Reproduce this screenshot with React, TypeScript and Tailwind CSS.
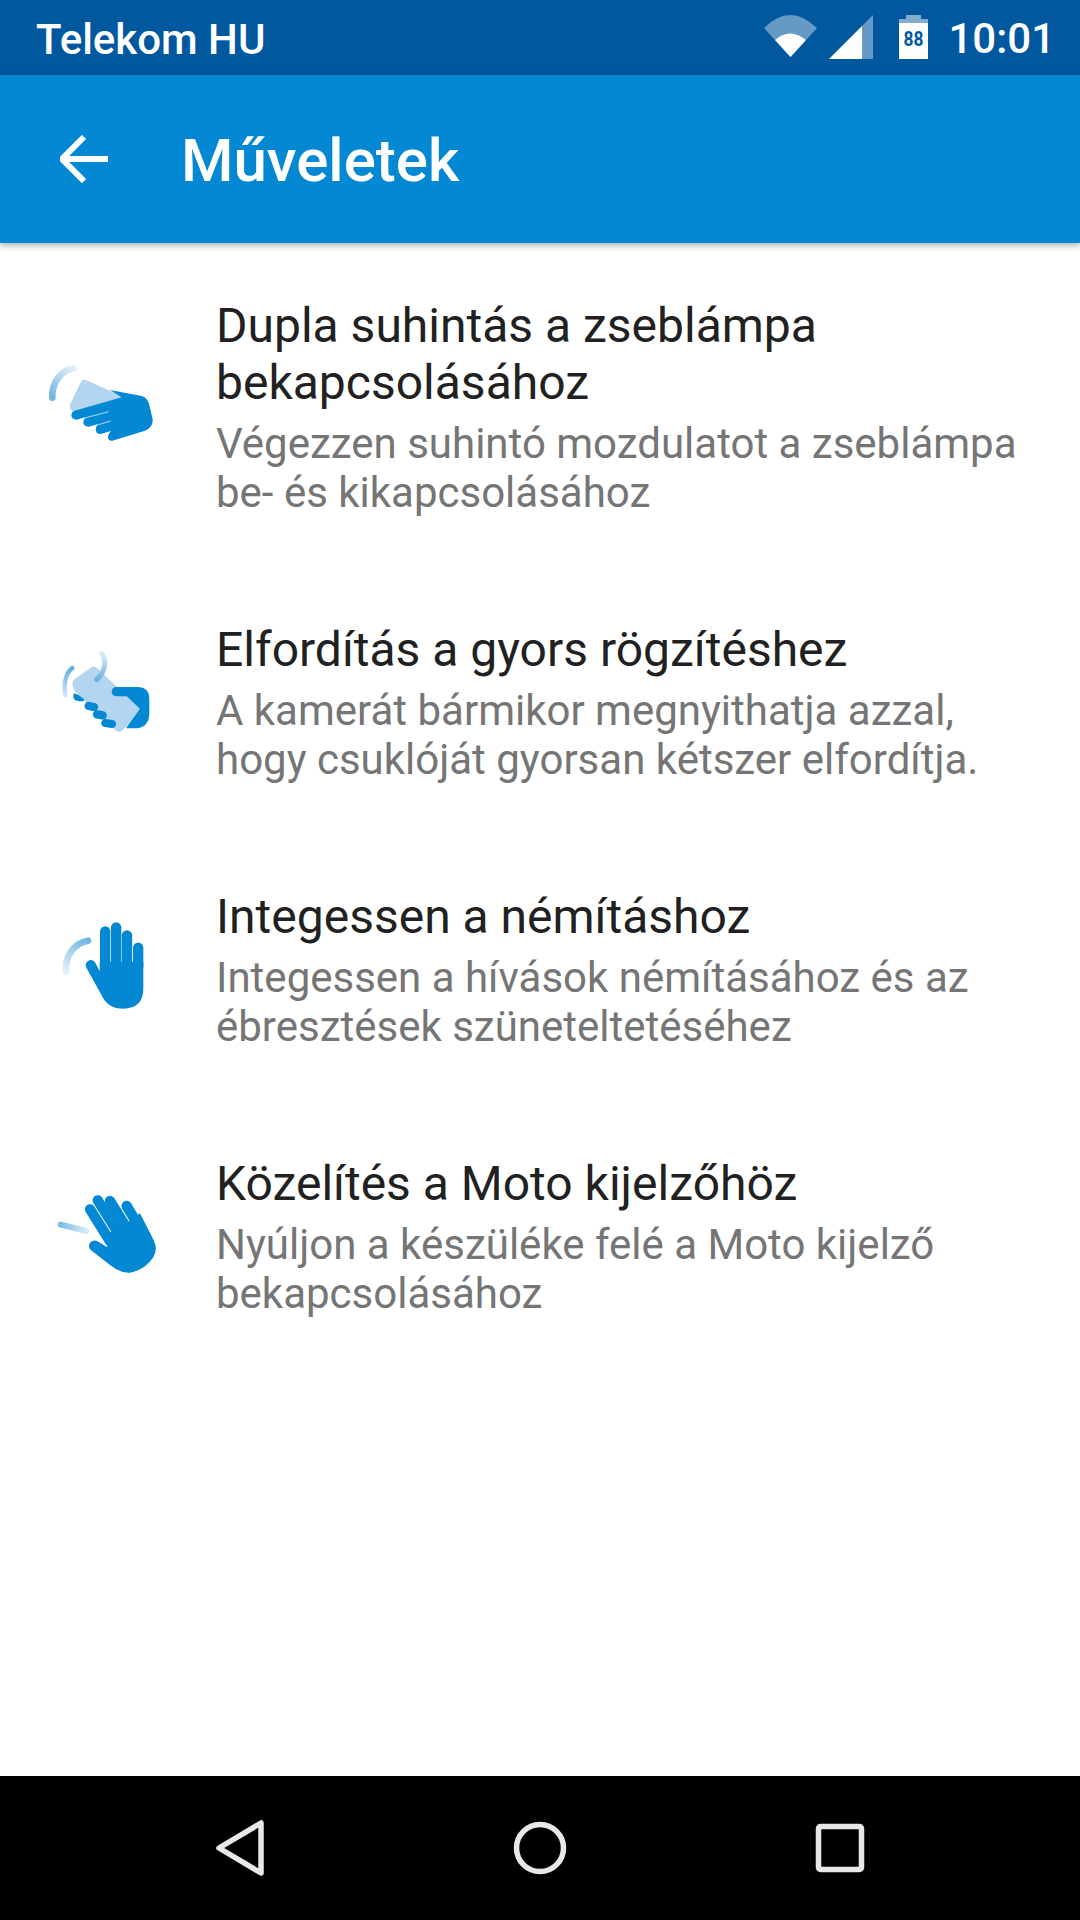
const FONT = "font-['Roboto','Noto_Sans',sans-serif]";
const BLUE = "#0588d3";
const LIGHT = "#b4d5ef";

function Icon({ children, className }: { children: React.ReactNode; className: string }) {
  return (
    <svg viewBox="0 0 420 360" className={`w-[140px] h-[120px] shrink-0 mr-[47px] ${className}`}>
      {children}
    </svg>
  );
}

function Swipe() {
  return (
    <Icon className="mt-[43px]">
      <defs>
        <linearGradient id="a1" gradientUnits="userSpaceOnUse" x1="68" y1="175" x2="135" y2="85">
          <stop offset="0" stopColor="#6fb4e2" />
          <stop offset="1" stopColor="#e4f1fa" />
        </linearGradient>
      </defs>
      <path d="M67 173C65 130 90 92 132 84" fill="none" stroke="url(#a1)" strokeWidth="20" strokeLinecap="round" />
      <path d="M165 122 L276 172 L130 212 Q118 205 125 190 L155 128 Q158 120 165 122Z" fill={LIGHT} stroke={LIGHT} strokeWidth="6" strokeLinejoin="round" />
      <path d="M240 150 L335 168 Q352 172 358 195 L368 238 Q370 262 345 272 L247 302 Q234 304 234 291 Q234 282 243 273 L212 282 Q197 282 197 268 Q197 260 205 252 L176 260 Q160 260 160 247 Q160 240 168 231 L140 239 Q124 238 124 226 Q124 216 134 212 L275 172Z" fill={BLUE} />
      <path d="M168 233 L236 215M205 254 L242 243" stroke="#fff" strokeWidth="2" fill="none" />
    </Icon>
  );
}

function Twist() {
  return (
    <Icon className="mt-[9px]">
      <defs>
        <linearGradient id="a2" gradientUnits="userSpaceOnUse" x1="130" y1="112" x2="105" y2="200">
          <stop offset="0" stopColor="#5fabdf" />
          <stop offset="1" stopColor="#d5e8f6" />
        </linearGradient>
        <linearGradient id="a3" gradientUnits="userSpaceOnUse" x1="215" y1="68" x2="198" y2="150">
          <stop offset="0" stopColor="#dcecf8" />
          <stop offset="1" stopColor="#65aee0" />
        </linearGradient>
      </defs>
      <path d="M130 150 L185 112 Q192 106 200 113 L330 235 Q338 245 330 252 L278 300 Q268 310 258 302 L136 185 Q122 165 130 150Z" fill={LIGHT} />
      <path d="M127 114C106 130 100 165 106 197" fill="none" stroke="url(#a2)" strokeWidth="13" strokeLinecap="round" />
      <path d="M215 70C230 90 228 125 200 148" fill="none" stroke="url(#a3)" strokeWidth="15" strokeLinecap="round" />
      <path d="M259 171 H322 Q358 171 358 207 V248 Q358 295 312 295 H288 L330 236 L290 199 H259 A14 14 0 0 1 259 171Z" fill={BLUE} />
      <path d="M132 190 Q145 192 162 208 Q165 214 150 214 Q128 212 130 198Z" fill={BLUE} />
      <g stroke={BLUE} strokeWidth="25" strokeLinecap="round">
        <path d="M176 228 L192 231" />
        <path d="M201 253 L218 256" />
        <path d="M226 279 L246 282" />
      </g>
    </Icon>
  );
}

function Wave() {
  return (
    <Icon className="mt-[12px]">
      <defs>
        <linearGradient id="a4" gradientUnits="userSpaceOnUse" x1="175" y1="122" x2="108" y2="218">
          <stop offset="0" stopColor="#6fb4e2" />
          <stop offset="1" stopColor="#e4f1fa" />
        </linearGradient>
      </defs>
      <path d="M174 122C130 130 104 170 108 215" fill="none" stroke="url(#a4)" strokeWidth="20" strokeLinecap="round" />
      <g stroke={BLUE} strokeWidth="31" strokeLinecap="round">
        <path d="M225.5 94 V200" />
        <path d="M258.5 82 V200" />
        <path d="M291 106 V200" />
        <path d="M324.5 143 V200" />
      </g>
      <path d="M209 185 H340 V265 Q340 326 280 326 Q232 326 214 284 L170 205 Q162 190 175 182 Q190 176 198 192 L209 214Z" fill={BLUE} />
    </Icon>
  );
}

function Reach() {
  return (
    <Icon className="mt-[15px]">
      <defs>
        <linearGradient id="a5" gradientUnits="userSpaceOnUse" x1="90" y1="163" x2="178" y2="185">
          <stop offset="0" stopColor="#7dbce6" />
          <stop offset="1" stopColor="#e0eff9" />
        </linearGradient>
      </defs>
      <path d="M92 164 L170 183" stroke="url(#a5)" strokeWidth="18" strokeLinecap="round" fill="none" />
      <g stroke={BLUE} strokeWidth="31" strokeLinecap="round">
        <path d="M180 118 L240 214" />
        <path d="M203 91 L265 190" />
        <path d="M240 93 L300 190" />
        <path d="M290 108 L345 200" />
      </g>
      <path d="M232 232 L225 195 L240 187 L268 170 L296 155 L330 130 L372 212 Q384 240 370 262 Q345 300 300 308 Q270 310 240 285 L186 243 Q170 230 182 216 Q194 206 210 218 Z" fill={BLUE} />
    </Icon>
  );
}

const rows = [
  {
    icon: <Swipe />,
    title: ["Dupla suhintás a zseblámpa", "bekapcsolásához"],
    sub: ["Végezzen suhintó mozdulatot a zseblámpa", "be- és kikapcsolásához"],
  },
  {
    icon: <Twist />,
    title: ["Elfordítás a gyors rögzítéshez"],
    sub: ["A kamerát bármikor megnyithatja azzal,", "hogy csuklóját gyorsan kétszer elfordítja."],
  },
  {
    icon: <Wave />,
    title: ["Integessen a némításhoz"],
    sub: ["Integessen a hívások némításához és az", "ébresztések szüneteltetéséhez"],
  },
  {
    icon: <Reach />,
    title: ["Közelítés a Moto kijelzőhöz"],
    sub: ["Nyúljon a készüléke felé a Moto kijelző", "bekapcsolásához"],
  },
];

export default function App() {
  return (
    <div className={`w-[1080px] h-[1920px] flex flex-col bg-white overflow-hidden ${FONT}`}>
      <div className="h-[75px] shrink-0 bg-[#01589f] flex items-center text-white">
        <span className="pl-[36px] pt-[4px] text-[42px] font-medium leading-none">Telekom HU</span>
        <div className="ml-auto flex items-center pr-[25px]">
          <svg viewBox="0 0 53 42" className="w-[53px] h-[42px] mr-[12px] mt-[-3px]">
            <path d="M0 13 Q26 -13 53 13 L26.5 42Z" fill="#fff" fillOpacity="0.4" />
            <path d="M11 25 Q26 12 42 25 L26.5 42Z" fill="#fff" />
          </svg>
          <svg viewBox="0 0 44 44" className="w-[44px] h-[44px] mr-[26px] mt-[-1px]">
            <path d="M44 0 V44 H33 V11Z" fill="#fff" fillOpacity="0.4" />
            <path d="M33 11 V44 H0Z" fill="#fff" />
          </svg>
          <svg viewBox="0 0 29 44" className="w-[29px] h-[44px] mr-[20px] mt-[-1px]">
            <path d="M7 0 H22 V4 H29 V8 H0 V4 H7Z" fill="#fff" fillOpacity="0.5" />
            <rect x="0" y="8" width="29" height="36" fill="#fff" />
            <text x="14.5" y="31" textAnchor="middle" fontSize="20" fontWeight="700" fill="#01589f" fontFamily="Roboto" textLength="20" lengthAdjust="spacingAndGlyphs">88</text>
          </svg>
          <span className="pt-[2px] text-[42px] font-medium leading-none">10:01</span>
        </div>
      </div>
      <div className="h-[168px] shrink-0 bg-[#0588d3] flex items-center text-white shadow-[0_3px_6px_rgba(0,0,0,0.28)] relative">
        <svg viewBox="0 0 48 48" className="w-[48px] h-[48px] ml-[60px] mr-[73px]">
          <path d="M48 24 H4 M24 2 L2 24 L24 46" fill="none" stroke="#fff" strokeWidth="6" />
        </svg>
        <span className="pt-[3px] text-[60px] font-medium leading-none">Műveletek</span>
      </div>
      <div className="flex-1 flex flex-col gap-[104px] pt-[54px]">
        {rows.map((r) => (
          <div key={r.title[0]} className="flex items-start pl-[30px]">
            {r.icon}
            <div className="flex flex-col -ml-[1px]">
              {r.title.map((t) => (
                <div key={t} className="text-[48px] leading-[57px] text-[#212121] whitespace-nowrap">{t}</div>
              ))}
              <div className="mt-[8px]">
                {r.sub.map((t) => (
                  <div key={t} className="text-[42px] leading-[49px] text-[#757575] whitespace-nowrap">{t}</div>
                ))}
              </div>
            </div>
          </div>
        ))}
      </div>
      <div className="h-[144px] shrink-0 bg-black flex items-center justify-center gap-[240px]">
        <svg viewBox="0 0 60 60" className="w-[60px] h-[60px]">
          <path d="M9 30 L51 5 V55Z" fill="none" stroke="#e8e8e8" strokeWidth="5.5" strokeLinejoin="round" />
        </svg>
        <svg viewBox="0 0 60 60" className="w-[60px] h-[60px]">
          <circle cx="30" cy="30" r="23.5" fill="none" stroke="#e8e8e8" strokeWidth="5.5" />
        </svg>
        <svg viewBox="0 0 60 60" className="w-[60px] h-[60px]">
          <rect x="8.5" y="8.5" width="43" height="43" rx="2" fill="none" stroke="#e8e8e8" strokeWidth="5.5" />
        </svg>
      </div>
    </div>
  );
}
